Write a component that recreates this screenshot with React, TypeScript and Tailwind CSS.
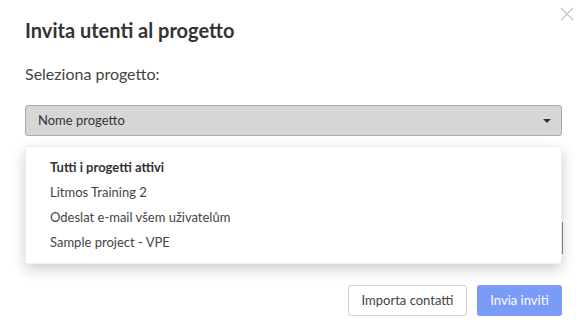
import React from 'react';

const projects = [
    {label: 'Tutti i progetti attivi', bold: true},
    {label: 'Litmos Training 2'},
    {label: 'Odeslat e-mail všem uživatelům'},
    {label: 'Sample project - VPE'},
];

const App = () => {
    return (
        <div className="relative w-[586px] h-[332px] bg-white overflow-hidden font-['Lato','Noto_Sans',sans-serif] text-[#333]">
            <button className="absolute right-[12px] top-[7px] w-[14px] h-[14px] text-[#c4c4c4]">
                <svg viewBox="0 0 14 14" width="14" height="14" fill="none" stroke="currentColor" strokeWidth="1.1">
                    <path d="M1 1 L13 13 M13 1 L1 13"/>
                </svg>
            </button>

            <div className="px-[25px] pt-[17px]">
                <h2 className="text-[20px] leading-[26px] font-bold text-[#333]">Invita utenti al progetto</h2>
                <p className="mt-[21px] text-[16px] leading-[20px] text-[#444]">Seleziona progetto:</p>

                <div className="mt-[21px] w-[537px] h-[31px] flex items-center justify-between pl-[12px] pr-[10px] bg-[#d6d6d6] border border-[#a9a9a9] rounded-[3px] text-[13px] text-[#333]">
                    <span>Nome progetto</span>
                    <svg width="8" height="4" viewBox="0 0 8 4">
                        <path d="M0 0 H8 L4 4 Z" fill="#333"/>
                    </svg>
                </div>

                {/* field underneath the open list, only its edge peeks out */}
                <div className="relative mt-[10px] h-[118px] w-[537px] flex flex-col items-end pt-[76px]">
                    <div className="h-[32px] w-[20px] mr-[-1px] border-r border-[#8a8a8a]"/>
                    <div className="absolute inset-0 bg-white rounded-[3px] shadow-[0_5px_14px_rgba(0,0,0,0.2)] border border-[#eeeeee] pt-[8px] pl-[24px]">
                        {projects.map((p) => (
                            <div key={p.label}
                                 className={`h-[25px] flex items-center text-[13px] ${p.bold ? 'font-bold text-[#333]' : 'text-[#444]'}`}>
                                {p.label}
                            </div>
                        ))}
                    </div>
                </div>

                <div className="mt-[21px] w-[537px] flex justify-end gap-[10px]">
                    <button className="h-[31px] w-[119px] border border-[#cfcfcf] rounded-[3px] bg-white text-[13px] text-[#444]">
                        Importa contatti
                    </button>
                    <button className="h-[31px] w-[85px] rounded-[3px] bg-[#7a9bf7] text-[13px] text-white">
                        Invia inviti
                    </button>
                </div>
            </div>
        </div>
    );
};

export default App;
